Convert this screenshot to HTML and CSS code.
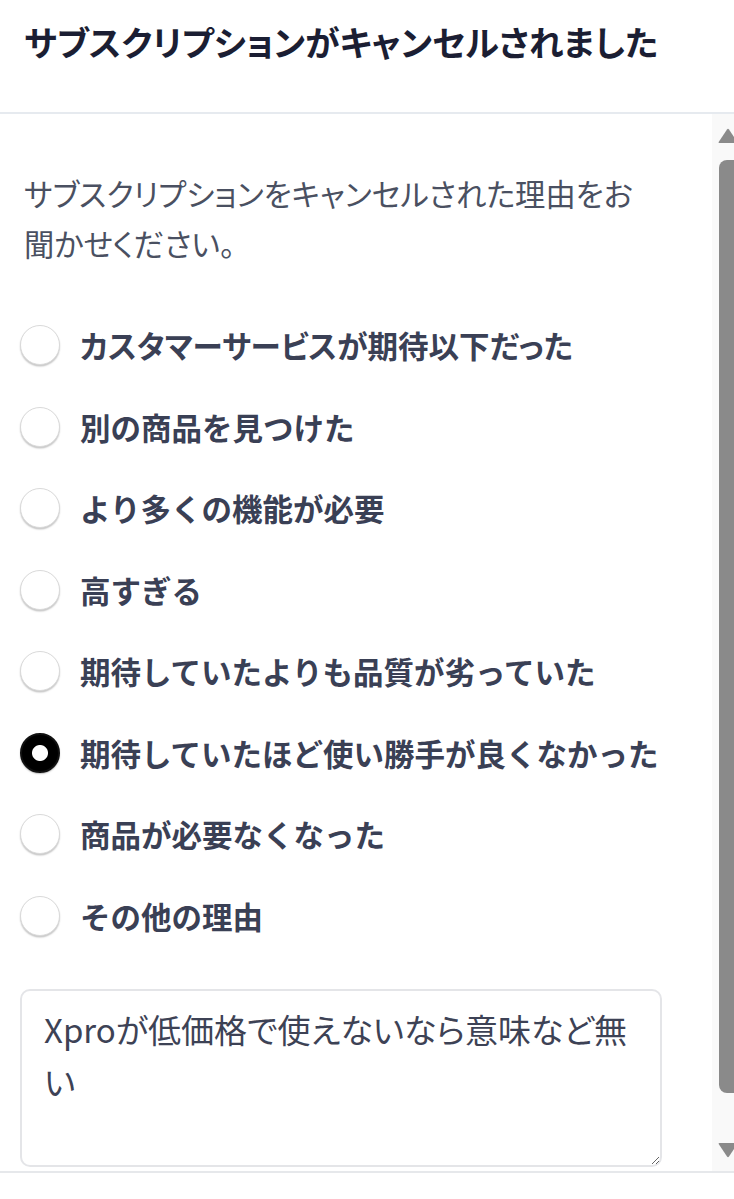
FILE: index.html
```html
<!DOCTYPE html>
<html lang="ja">
<head>
<meta charset="utf-8">
<title>サブスクリプションがキャンセルされました</title>
<link rel="stylesheet" href="styles.css">
</head>
<body>
<div class="modal">
  <header class="head">
    <h1 class="title">サブスクリプションがキャンセルされました</h1>
  </header>
  <div class="body-wrap">
    <div class="content">
      <p class="lead">サブスクリプションをキャンセルされた理由をお聞かせください。</p>
      <div class="options">
        <label class="opt"><input class="radio" type="radio" name="r"><span class="prop">カスタマーサービスが期待以下だった</span></label>
        <label class="opt"><input class="radio" type="radio" name="r"><span>別の商品を見つけた</span></label>
        <label class="opt"><input class="radio" type="radio" name="r"><span>より多くの機能が必要</span></label>
        <label class="opt"><input class="radio" type="radio" name="r"><span>高すぎる</span></label>
        <label class="opt"><input class="radio" type="radio" name="r"><span>期待していたよりも品質が劣っていた</span></label>
        <label class="opt"><input class="radio" type="radio" name="r" checked><span>期待していたほど使い勝手が良くなかった</span></label>
        <label class="opt"><input class="radio" type="radio" name="r"><span>商品が必要なくなった</span></label>
        <label class="opt"><input class="radio" type="radio" name="r"><span>その他の理由</span></label>
      </div>
      <textarea class="note">Xproが低価格で使えないなら意味など無い</textarea>
    </div>
    <div class="scrollbar" aria-hidden="true">
      <svg class="arrow" width="16" height="15" viewBox="0 0 16 15"><path d="M1.5 15 Q0 15 1 13.5 L9 1.5 Q10 0 11 1.5 L19 13.5 Q20 15 18.5 15 Z" fill="#8a8a8a"/></svg>
      <div class="thumb"></div>
      <svg class="arrow down" width="16" height="15" viewBox="0 0 16 15"><path d="M1.5 0 Q0 0 1 1.5 L9 13.5 Q10 15 11 13.5 L19 1.5 Q20 0 18.5 0 Z" fill="#8a8a8a"/></svg>
    </div>
  </div>
</div>
</body>
</html>
```

FILE: styles.css
```css
html, body {
  margin: 0;
  padding: 0;
  background: #ffffff;
}
body {
  font-family: "Noto Sans CJK JP", "Noto Sans", sans-serif;
  font-feature-settings: "palt";
  width: 734px;
  overflow: hidden;
}
.modal {
  display: flex;
  flex-direction: column;
}
.head {
  height: 112px;
  border-bottom: 2px solid #e6eaef;
  padding: 0 24px;
  box-sizing: content-box;
}
.title {
  margin: 0;
  padding-top: 16px;
  font-size: 34.5px;
  line-height: 51px;
  font-weight: 700;
  color: #1b1e33;
}
.body-wrap {
  display: flex;
  height: 1057px;
  border-bottom: 2px solid #e6e8eb;
}
.content {
  flex: 1;
  padding: 54px 50px 0 20px;
  display: flex;
  flex-direction: column;
}
.lead {
  margin: 0;
  padding: 0 20px 0 4px;
  font-size: 30.3px;
  line-height: 50px;
  font-weight: 400;
  color: #4a5061;
}
.options {
  display: flex;
  flex-direction: column;
  gap: 41.5px;
  margin-top: 57px;
}
.opt {
  display: flex;
  align-items: center;
  gap: 20px;
  height: 40px;
  font-size: 30.5px;
  font-weight: 700;
  color: #3a4055;
  font-feature-settings: normal;
}
.opt .prop {
  font-feature-settings: "palt";
}
.radio {
  appearance: none;
  -webkit-appearance: none;
  margin: 0;
  width: 40px;
  height: 40px;
  flex: none;
  border-radius: 50%;
  border: 1.5px solid #dadada;
  box-shadow: 0 1.5px 1.5px rgba(0, 0, 0, 0.22);
  background: #ffffff;
  box-sizing: border-box;
}
.radio:checked {
  border: 2px solid #111111;
  background: radial-gradient(circle, #ffffff 0 7.5px, #000000 8.5px);
  box-shadow: 0 1px 1.5px rgba(0, 0, 0, 0.25);
}
.note {
  margin-top: 53px;
  width: 642px;
  height: 178px;
  box-sizing: border-box;
  border: 2px solid #e4e5e8;
  border-radius: 10px;
  padding: 12px 22px;
  font-family: "Noto Sans CJK JP", "Noto Sans", sans-serif;
  font-feature-settings: "palt";
  font-size: 33px;
  line-height: 52px;
  color: #3d4255;
  outline: none;
}
.scrollbar {
  width: 22px;
  flex: none;
  background: #f9f9f9;
  display: flex;
  flex-direction: column;
  align-items: flex-end;
  overflow: hidden;
}
.arrow {
  display: block;
  margin-top: 14px;
}
.thumb {
  margin-top: 17px;
  width: 15px;
  height: 933px;
  background: #8a8a8a;
  border-radius: 8px 0 0 8px;
}
.arrow.down {
  margin-top: 50px;
}
```
